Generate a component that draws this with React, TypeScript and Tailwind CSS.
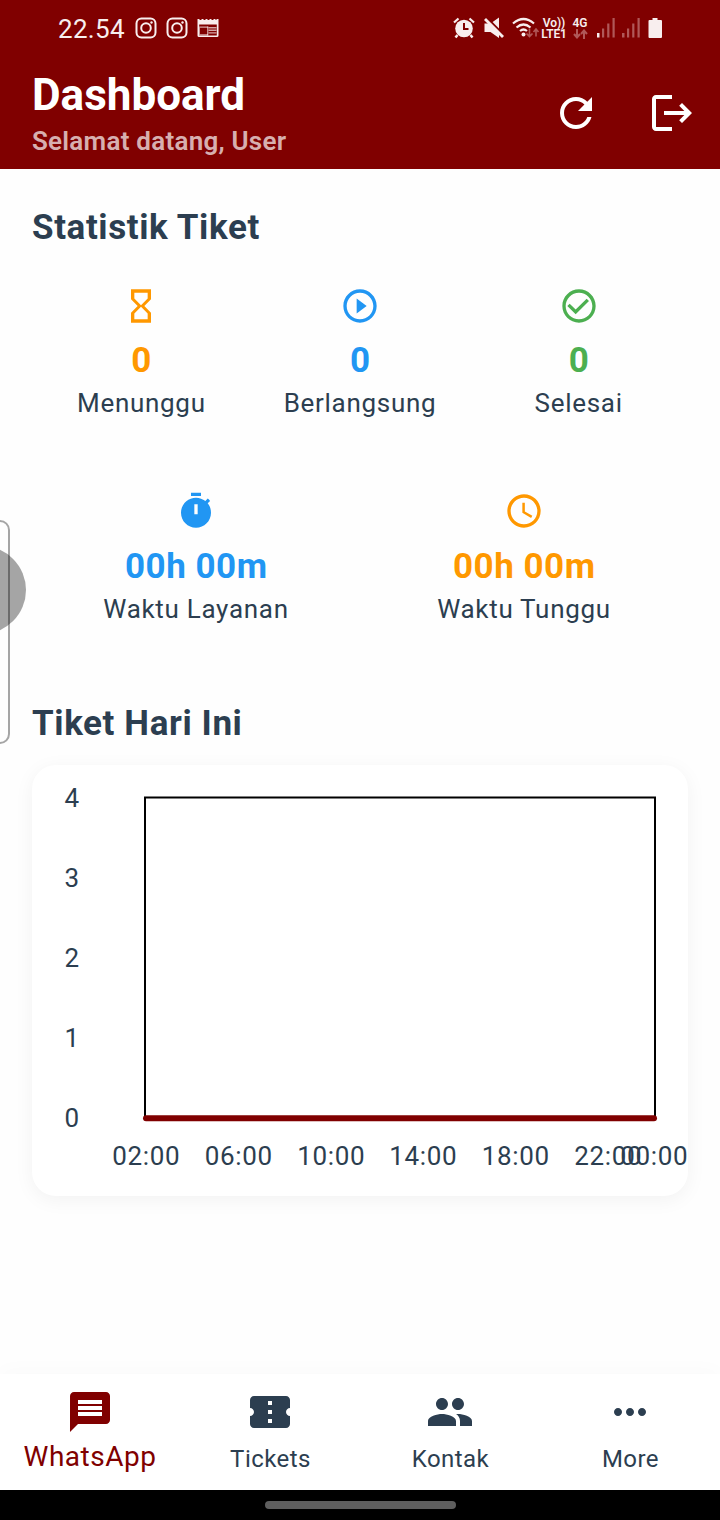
const P: Record<string, string> = {
  refresh: 'M17.65 6.35C16.2 4.9 14.21 4 12 4c-4.42 0-7.99 3.58-7.99 8s3.57 8 7.99 8c3.73 0 6.84-2.55 7.73-6h-2.08c-.82 2.33-3.04 4-5.65 4-3.31 0-6-2.69-6-6s2.69-6 6-6c1.66 0 3.14.69 4.22 1.78L13 11h7V4l-2.35 2.35z',
  logout: 'M17 7l-1.41 1.41L18.17 11H8v2h10.17l-2.58 2.58L17 17l5-5zM4 5h8V3H4c-1.1 0-2 .9-2 2v14c0 1.1.9 2 2 2h8v-2H4V5z',
  hourglass: 'M6 2v6h.01L6 8.01 10 12l-4 4 .01.01H6V22h12v-5.99h-.01L18 16l-4-4 4-3.99-.01-.01H18V2H6zm10 14.5V20H8v-3.5l4-4 4 4zm-4-5l-4-4V4h8v3.5l-4 4z',
  play: 'M10 16.5l6-4.5-6-4.5v9zM12 2C6.48 2 2 6.48 2 12s4.48 10 10 10 10-4.48 10-10S17.52 2 12 2zm0 18c-4.41 0-8-3.59-8-8s3.59-8 8-8 8 3.59 8 8-3.59 8-8 8z',
  check: 'M16.59 7.58L10 14.17l-3.59-3.58L5 12l5 5 8-8zM12 2C6.48 2 2 6.48 2 12s4.48 10 10 10 10-4.48 10-10S17.52 2 12 2zm0 18c-4.42 0-8-3.58-8-8s3.58-8 8-8 8 3.58 8 8-3.58 8-8 8z',
  timer: 'M9 1h6v2H9zM19.03 7.39l1.42-1.42c-.43-.51-.9-.99-1.41-1.41l-1.42 1.42C16.07 4.74 14.12 4 12 4c-4.97 0-9 4.03-9 9s4.02 9 9 9 9-4.03 9-9c0-2.12-.74-4.07-1.97-5.61zM13 14h-2V8h2v6z',
  clock: 'M11.99 2C6.47 2 2 6.48 2 12s4.47 10 9.99 10C17.52 22 22 17.52 22 12S17.52 2 11.99 2zM12 20c-4.42 0-8-3.58-8-8s3.58-8 8-8 8 3.58 8 8-3.58 8-8 8zm.5-13H11v6l5.25 3.15.75-1.23-4.5-2.67z',
  message: 'M20 2H4c-1.1 0-1.99.9-1.99 2L2 22l4-4h14c1.1 0 2-.9 2-2V4c0-1.1-.9-2-2-2zm-2 12H6v-2h12v2zm0-3H6V9h12v2zm0-3H6V6h12v2z',
  ticket: 'M22 10V6c0-1.11-.9-2-2-2H4c-1.1 0-1.99.89-1.99 2v4c1.1 0 1.99.9 1.99 2s-.89 2-2 2v4c0 1.1.9 2 2 2h16c1.1 0 2-.9 2-2v-4c-1.1 0-2-.9-2-2s.9-2 2-2zm-9 7.5h-2v-2h2v2zm0-4.5h-2v-2h2v2zm0-4.5h-2v-2h2v2z',
  people: 'M16 11c1.66 0 2.99-1.34 2.99-3S17.66 5 16 5c-1.66 0-3 1.34-3 3s1.34 3 3 3zm-8 0c1.66 0 2.99-1.34 2.99-3S9.66 5 8 5C6.34 5 5 6.34 5 8s1.34 3 3 3zm0 2c-2.33 0-7 1.17-7 3.5V19h14v-2.5c0-2.33-4.67-3.5-7-3.5zm8 0c-.29 0-.62.02-.97.05 1.16.84 1.97 1.97 1.97 3.45V19h6v-2.5c0-2.33-4.67-3.5-7-3.5z',
  more: 'M6 10c-1.1 0-2 .9-2 2s.9 2 2 2 2-.9 2-2-.9-2-2-2zm12 0c-1.1 0-2 .9-2 2s.9 2 2 2 2-.9 2-2-.9-2-2-2zm-6 0c-1.1 0-2 .9-2 2s.9 2 2 2 2-.9 2-2-.9-2-2-2z',
};

const Icon = ({ name, className }: { name: string; className: string }) => (
  <svg viewBox="0 0 24 24" fill="currentColor" className={className}><path d={P[name]} /></svg>
);

const Instagram = () => (
  <svg viewBox="0 0 22 22" className="h-[22px] w-[22px]" fill="none" stroke="#f8eeee" strokeWidth="2">
    <rect x="1.5" y="1.5" width="19" height="19" rx="5" /><circle cx="11" cy="11" r="4.8" /><circle cx="16.5" cy="5.5" r="1.2" fill="#f8eeee" stroke="none" />
  </svg>
);

const Signal = ({ on }: { on?: boolean }) => (
  <svg viewBox="0 0 20 20" className="h-5 w-5" fill="#b05858">
    <rect x="1" y="15" width="2.5" height="4.5" fill={on ? '#f8eeee' : '#b05858'} /><rect x="6" y="10.5" width="2.2" height="9" /><rect x="11.2" y="5.5" width="2.2" height="14" /><rect x="16.5" y="0" width="2.2" height="19.5" />
  </svg>
);

const StatusBar = () => (
  <div className="flex h-14 items-center pl-[58px] pr-[57px] text-[#f8eeee]">
    <span className="relative top-[1.5px] w-[77px] text-[26px] tracking-[0.3px]">22.54</span>
    <div className="flex gap-[9px]">
      <Instagram /><Instagram />
      <svg viewBox="0 0 22 20" className="mt-px h-5 w-[22px]" fill="#f8eeee">
        <path d="M.5 1h2v1h2V1h2v1h2V1h2v1h2V1h2v1h2V1h2v1h1V1h2v16.500a1.500 1.500 0 0 1-1.500 1.500h-18A1.500 1.500 0 0 1 .5 17.500zM2.200 6.500v11h17.600v-11z" fillRule="evenodd" />
        <path d="M2.200 8.500h9v1.300H3v6.400h8v1.300H2.200zM11.500 9h8v1.400h-8zM11.500 11.600h8V13h-8zM11.500 14.200h8v1.400h-8z" opacity=".7" /><rect x="10" y="8.500" width="1.400" height="9" opacity=".6" />
      </svg>
    </div>
    <svg viewBox="0 0 22 22" className="ml-auto h-[22px] w-[22px]" fill="none" stroke="#f8eeee">
      <circle cx="11" cy="11.500" r="8.800" fill="#f8eeee" stroke="none" /><path d="M1 5.500 5.500 1.500M21 5.500 16.500 1.500" strokeWidth="2.200" /><path d="M4.500 18 2.500 20.500M17.500 18l2 2.500" strokeWidth="2.500" /><path d="M11 6v6h4.500" stroke="#800000" strokeWidth="2" />
    </svg>
    <svg viewBox="0 0 20 22" className="ml-[9px] h-[22px] w-5" fill="#f8eeee"><path d="M.5 6.500h6L15 .5v20.500l-8.500-6h-6z" /><path d="M2 0 20 18" stroke="#800000" strokeWidth="2.200" /><path d="M1 2 19 20" stroke="#f8eeee" strokeWidth="2.800" /></svg>
    <svg viewBox="0 0 28 22" className="ml-[8px] h-[22px] w-7" fill="none" stroke="#f8eeee" strokeWidth="2.200">
      <path d="M1 6.500Q11.500-2.500 22 6.500M4.500 10.500q7-6 14 0M8 14q3.500-3 7 0" /><circle cx="11.500" cy="17.500" r="2" fill="#f8eeee" stroke="none" /><path d="M17.500 11.500v8m-3-3 3 3 3-3M24 19.500v-7m-2.500 2.500 2.500-3 2.500 3" stroke="#b05858" strokeWidth="1.600" />
    </svg>
    <div className="relative top-px ml-px w-[26px] text-center text-[12px] leading-[11px] font-semibold tracking-[-0.1px] whitespace-nowrap">Vo))<br />LTE1</div>
    <div className="ml-[5px] flex w-4 flex-col items-center text-[12px] leading-[12px] font-semibold">4G
      <svg viewBox="0 0 15 10" className="h-[10px] w-[15px]" fill="none" stroke="#b05858" strokeWidth="2"><path d="M4 0v8M1 5l3 3.500L7 5M11 10V2M8 5l3-3.500L14 5" /></svg>
    </div>
    <div className="ml-[8px] flex gap-[5px]"><Signal on /><Signal /></div>
    <svg viewBox="0 0 15 22" className="ml-[7px] h-[22px] w-[15px]" fill="#f8eeee"><path d="M4.500 1h5v2H13a1 1 0 0 1 1 1v16a1 1 0 0 1-1 1H1.500a1 1 0 0 1-1-1V4a1 1 0 0 1 1-1h3z" /></svg>
  </div>
);

const Stat = ({ icon, color, value, label }: { icon: string; color: string; value: string; label: string }) => (
  <div className="flex flex-1 flex-col items-center">
    <Icon name={icon} className={`h-10 w-10 ${color}`} />
    <div className={`mt-auto h-[44px] pl-[0.5px] text-[35px] leading-[44px] font-bold tracking-[0.5px] ${color}`}>{value}</div>
    <div className="mt-1 text-[26px] leading-[32px] tracking-[0.7px]">{label}</div>
  </div>
);

const hours: [string, number][] = [['02:00', 114.3], ['06:00', 206.8], ['10:00', 299.3], ['14:00', 391.3], ['18:00', 483.8], ['22:00', 576.3], ['00:00', 622.3]];

const nav = [
  { icon: 'message', label: 'WhatsApp' },
  { icon: 'ticket', label: 'Tickets' },
  { icon: 'people', label: 'Kontak' },
  { icon: 'more', label: 'More' },
];

export default function App() {
  return (
    <div className="relative flex h-[1520px] w-[720px] flex-col overflow-hidden bg-[#fefefe] font-[Roboto,sans-serif] text-[#2c3e50]">
      <header className="h-[169px] shrink-0 bg-[#800000] text-white">
        <StatusBar />
        <div className="flex items-center pl-8 pr-6">
          <div className="flex-1">
            <h1 className="mt-[13px] text-[44px] leading-[52px] font-bold">Dashboard</h1>
            <p className="mt-[5px] text-[26px] leading-[30px] font-semibold tracking-[0.25px] text-white/70">Selamat datang, User</p>
          </div>
          <Icon name="refresh" className="mr-12 mt-[14px] h-12 w-12" />
          <Icon name="logout" className="mt-[14px] h-12 w-12" />
        </div>
      </header>
      <main className="flex flex-1 flex-col px-8">
        <h2 className="mt-[38px] text-[35px] leading-[42px] font-bold tracking-[0.6px]">Statistik Tiket</h2>
        <div className="mt-[37px] flex h-[133px]">
          <Stat icon="hourglass" color="text-[#ff9800]" value="0" label="Menunggu" />
          <Stat icon="play" color="text-[#2196f3]" value="0" label="Berlangsung" />
          <Stat icon="check" color="text-[#4caf50]" value="0" label="Selesai" />
        </div>
        <div className="mt-[72px] flex h-[134px]">
          <Stat icon="timer" color="text-[#2196f3]" value="00h 00m" label="Waktu Layanan" />
          <Stat icon="clock" color="text-[#ff9800]" value="00h 00m" label="Waktu Tunggu" />
        </div>
        <h2 className="mt-[78px] text-[35px] leading-[42px] font-bold tracking-[0.6px]">Tiket Hari Ini</h2>
        <div className="mt-[20px] h-[431px] rounded-[24px] bg-white shadow-[0_4px_20px_rgba(0,0,0,0.05)]">
          <svg viewBox="0 0 656 431" className="h-[431px] w-[656px] overflow-visible" fill="#2c3e50" fontSize="26">
            {[4, 3, 2, 1, 0].map((n, i) => <text key={n} x="32.5" y={42 + i * 80}>{n}</text>)}
            <rect x="113" y="32.500" width="510" height="321" fill="none" stroke="#000" strokeWidth="2" />
            <path d="M114 353.300H622" stroke="#800000" strokeWidth="6" strokeLinecap="round" />
            {hours.map(([t, x]) => <text key={t} x={x} y="400" textAnchor="middle" letterSpacing="0.7">{t}</text>)}
          </svg>
        </div>
      </main>
      <nav className="flex h-[116px] shrink-0 bg-white shadow-[0_-4px_20px_rgba(0,0,0,0.02)]">
        {nav.map((n, i) => (
          <div key={n.label} className={`flex flex-1 flex-col items-center pt-[14px] ${i === 0 ? 'text-[#800000]' : ''}`}>
            <Icon name={n.icon} className="h-12 w-12" />
            <span className={i === 0 ? 'mt-1 text-[28px] leading-[34px] tracking-[0.5px]' : 'mt-2 pl-px text-[24px] leading-[30px] tracking-[0.45px]'}>{n.label}</span>
          </div>
        ))}
      </nav>
      <footer className="flex h-[30px] shrink-0 items-center justify-center bg-black"><div className="h-2 w-[191px] rounded-full bg-[#5e5e5e]" /></footer>
      <div className="absolute top-[520px] -left-5 h-[224px] w-[30px] rounded-[10px] border-2 border-black/35" />
      <div className="absolute top-[546px] -left-[62px] h-[88px] w-[88px] rounded-full bg-black/35" />
    </div>
  );
}
